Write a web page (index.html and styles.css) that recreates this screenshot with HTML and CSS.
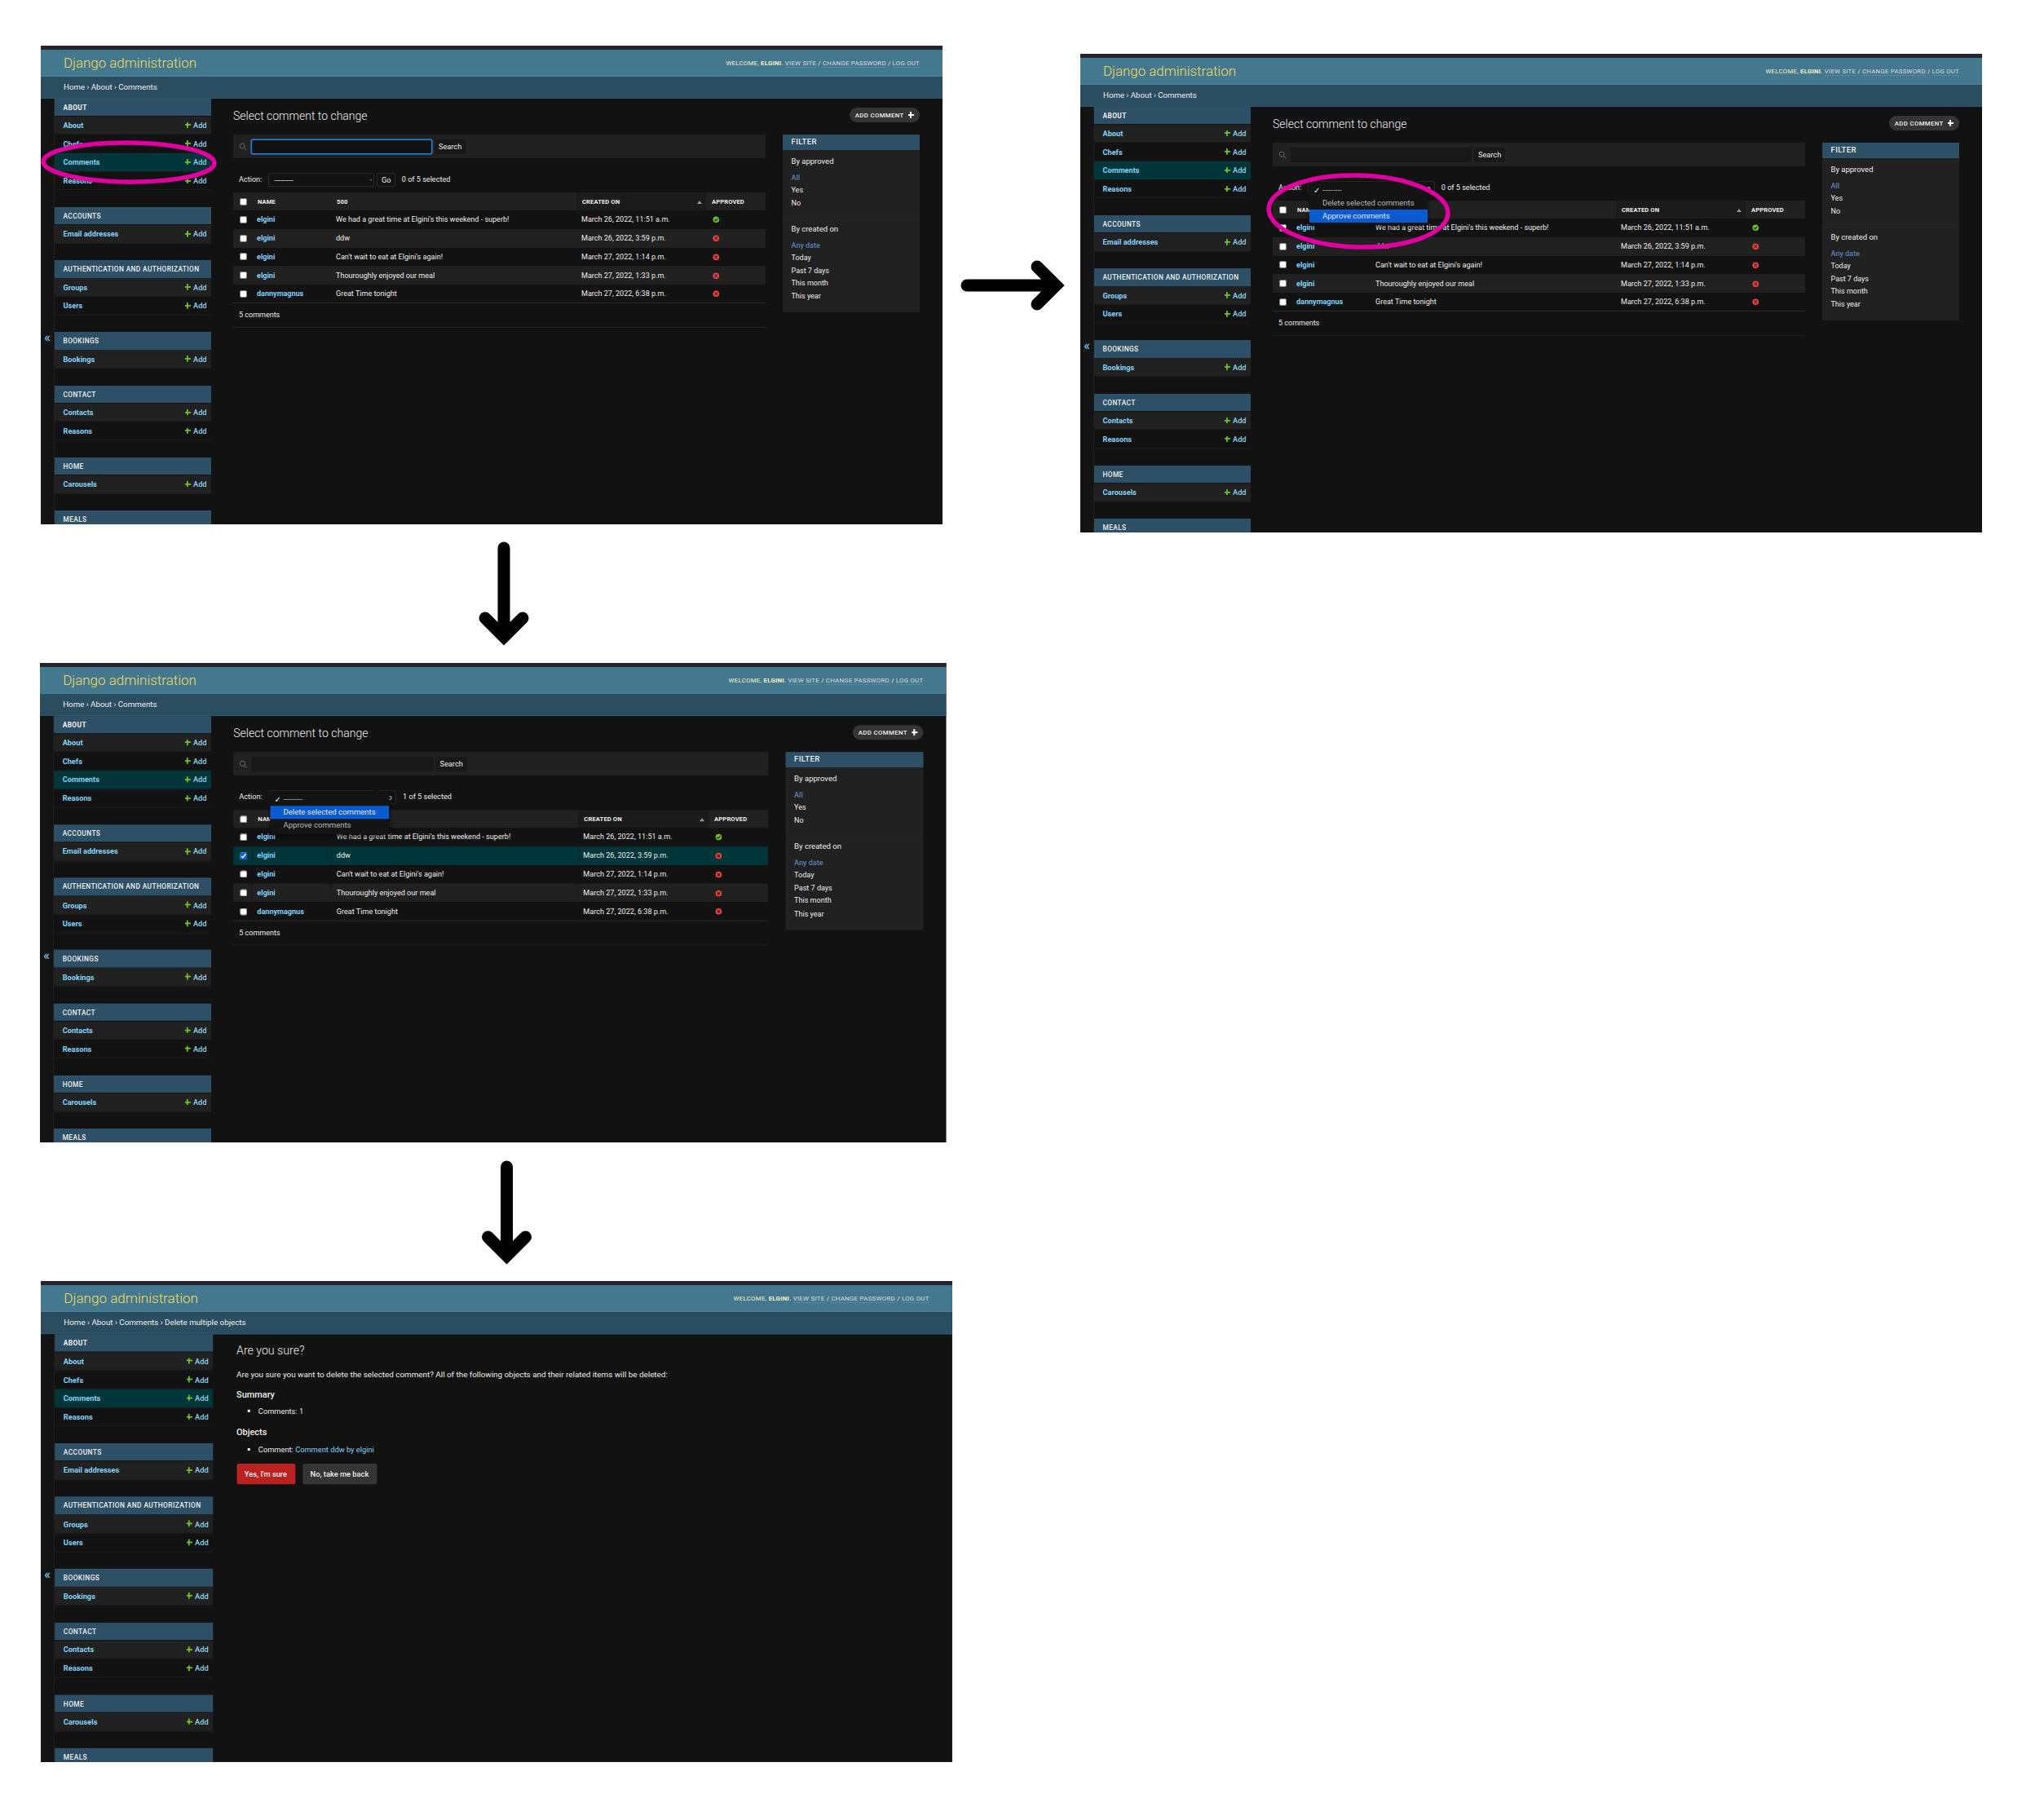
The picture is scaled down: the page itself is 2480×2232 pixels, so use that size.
FILE: index.html
```html
<!DOCTYPE html>
<html lang="en">
<head>
    <meta charset="UTF-8">
    <title>Django admin - deleting a comment</title>
    <link rel="stylesheet" href="styles.css">
</head>
<body>
    <!-- step 1: comment list, search focused -->
    <section class="shot shot-1">
        <header class="top">
            <div class="brand">Django administration</div>
            <div class="tools">Welcome, <b>elgini</b>. <u>View site</u> / <u>Change password</u> / <u>Log out</u></div>
        </header>
        <div class="crumbs">Home › About › Comments</div>
        <div class="body">
            <div class="toggle">«</div>
            <nav class="sidebar">
                <div class="module"><h4><b>About</b></h4>
                    <div class="row"><a>About</a><span class="add"><i class="plus"></i>Add</span></div>
                    <div class="row"><a>Chefs</a><span class="add"><i class="plus"></i>Add</span></div>
                    <div class="row current"><a>Comments</a><span class="add"><i class="plus"></i>Add</span></div>
                    <div class="row"><a>Reasons</a><span class="add"><i class="plus"></i>Add</span></div>
                </div>
                <div class="module"><h4>Accounts</h4>
                    <div class="row"><a>Email addresses</a><span class="add"><i class="plus"></i>Add</span></div>
                </div>
                <div class="module"><h4>Authentication and Authorization</h4>
                    <div class="row"><a>Groups</a><span class="add"><i class="plus"></i>Add</span></div>
                    <div class="row"><a>Users</a><span class="add"><i class="plus"></i>Add</span></div>
                </div>
                <div class="module"><h4>Bookings</h4>
                    <div class="row"><a>Bookings</a><span class="add"><i class="plus"></i>Add</span></div>
                </div>
                <div class="module"><h4>Contact</h4>
                    <div class="row"><a>Contacts</a><span class="add"><i class="plus"></i>Add</span></div>
                    <div class="row"><a>Reasons</a><span class="add"><i class="plus"></i>Add</span></div>
                </div>
                <div class="module"><h4>Home</h4>
                    <div class="row"><a>Carousels</a><span class="add"><i class="plus"></i>Add</span></div>
                </div>
                <div class="module"><h4>Meals</h4></div>
            </nav>
            <main class="content">
                <div class="title-row">
                    <h1>Select comment to change</h1>
                    <span class="add-btn">Add comment <i class="plus white"></i></span>
                </div>
                <div class="columns">
                    <div class="changelist">
                        <div class="search">
                            <svg class="glass" viewBox="0 0 12 12"><circle cx="5" cy="5" r="3.6"/><path d="M7.7 7.7L11 11"/></svg>
                            <span class="input focused"></span>
                            <span class="btn">Search</span>
                        </div>
                        <div class="actions">
                            <span>Action:</span>
                            <span class="select">---------<i class="caret"></i></span>
                            <span class="btn go">Go</span>
                            <span class="count">0 of 5 selected</span>
                        </div>
                        <table>
                            <colgroup><col class="c1"><col class="c2"><col class="c3"><col class="c4"><col></colgroup>
                            <thead><tr><th><input type="checkbox"></th><th>Name</th><th>500</th><th class="sorted">Created on<i class="sort"></i></th><th>Approved</th></tr></thead>
                            <tbody>
                                <tr><td><input type="checkbox"></td><td><a>elgini</a></td><td>We had a great time at Elgini's this weekend - superb!</td><td>March 26, 2022, 11:51 a.m.</td><td><svg class="ok" viewBox="0 0 10 10"><circle cx="5" cy="5" r="4.5"/><path d="M2.8 5.2L4.4 6.8L7.3 3.6"/></svg></td></tr>
                                <tr><td><input type="checkbox"></td><td><a>elgini</a></td><td>ddw</td><td>March 26, 2022, 3:59 p.m.</td><td><svg class="no" viewBox="0 0 10 10"><circle cx="5" cy="5" r="4.5"/><path d="M3.4 3.4L6.6 6.6M6.6 3.4L3.4 6.6"/></svg></td></tr>
                                <tr><td><input type="checkbox"></td><td><a>elgini</a></td><td>Can't wait to eat at Elgini's again!</td><td>March 27, 2022, 1:14 p.m.</td><td><svg class="no" viewBox="0 0 10 10"><circle cx="5" cy="5" r="4.5"/><path d="M3.4 3.4L6.6 6.6M6.6 3.4L3.4 6.6"/></svg></td></tr>
                                <tr><td><input type="checkbox"></td><td><a>elgini</a></td><td>Thouroughly enjoyed our meal</td><td>March 27, 2022, 1:33 p.m.</td><td><svg class="no" viewBox="0 0 10 10"><circle cx="5" cy="5" r="4.5"/><path d="M3.4 3.4L6.6 6.6M6.6 3.4L3.4 6.6"/></svg></td></tr>
                                <tr><td><input type="checkbox"></td><td><a>dannymagnus</a></td><td>Great Time tonight</td><td>March 27, 2022, 6:38 p.m.</td><td><svg class="no" viewBox="0 0 10 10"><circle cx="5" cy="5" r="4.5"/><path d="M3.4 3.4L6.6 6.6M6.6 3.4L3.4 6.6"/></svg></td></tr>
                            </tbody>
                        </table>
                        <p class="paginator">5 comments</p>
                    </div>
                    <aside class="filter">
                        <h2>Filter</h2>
                        <h3>By approved</h3>
                        <ul><li class="on">All</li><li>Yes</li><li>No</li></ul>
                        <h3 class="next">By created on</h3>
                        <ul><li class="on">Any date</li><li>Today</li><li>Past 7 days</li><li>This month</li><li>This year</li></ul>
                    </aside>
                </div>
            </main>
        </div>
    </section>

    <!-- step 2: action menu open, approve highlighted -->
    <section class="shot shot-2">
        <header class="top">
            <div class="brand">Django administration</div>
            <div class="tools">Welcome, <b>elgini</b>. <u>View site</u> / <u>Change password</u> / <u>Log out</u></div>
        </header>
        <div class="crumbs">Home › About › Comments</div>
        <div class="body">
            <div class="toggle">«</div>
            <nav class="sidebar">
                <div class="module"><h4><b>About</b></h4>
                    <div class="row"><a>About</a><span class="add"><i class="plus"></i>Add</span></div>
                    <div class="row"><a>Chefs</a><span class="add"><i class="plus"></i>Add</span></div>
                    <div class="row current"><a>Comments</a><span class="add"><i class="plus"></i>Add</span></div>
                    <div class="row"><a>Reasons</a><span class="add"><i class="plus"></i>Add</span></div>
                </div>
                <div class="module"><h4>Accounts</h4>
                    <div class="row"><a>Email addresses</a><span class="add"><i class="plus"></i>Add</span></div>
                </div>
                <div class="module"><h4>Authentication and Authorization</h4>
                    <div class="row"><a>Groups</a><span class="add"><i class="plus"></i>Add</span></div>
                    <div class="row"><a>Users</a><span class="add"><i class="plus"></i>Add</span></div>
                </div>
                <div class="module"><h4>Bookings</h4>
                    <div class="row"><a>Bookings</a><span class="add"><i class="plus"></i>Add</span></div>
                </div>
                <div class="module"><h4>Contact</h4>
                    <div class="row"><a>Contacts</a><span class="add"><i class="plus"></i>Add</span></div>
                    <div class="row"><a>Reasons</a><span class="add"><i class="plus"></i>Add</span></div>
                </div>
                <div class="module"><h4>Home</h4>
                    <div class="row"><a>Carousels</a><span class="add"><i class="plus"></i>Add</span></div>
                </div>
                <div class="module"><h4>Meals</h4></div>
            </nav>
            <main class="content">
                <div class="title-row">
                    <h1>Select comment to change</h1>
                    <span class="add-btn">Add comment <i class="plus white"></i></span>
                </div>
                <div class="columns">
                    <div class="changelist">
                        <div class="search">
                            <svg class="glass" viewBox="0 0 12 12"><circle cx="5" cy="5" r="3.6"/><path d="M7.7 7.7L11 11"/></svg>
                            <span class="input"></span>
                            <span class="btn">Search</span>
                        </div>
                        <div class="actions">
                            <span>Action:</span>
                            <span class="select"></span>
                            <span class="btn go">Go</span>
                            <span class="count">0 of 5 selected</span>
                        </div>
                        <table>
                            <colgroup><col class="c1"><col class="c2"><col class="c3"><col class="c4"><col></colgroup>
                            <thead><tr><th><input type="checkbox"></th><th>Name</th><th>500</th><th class="sorted">Created on<i class="sort"></i></th><th>Approved</th></tr></thead>
                            <tbody>
                                <tr><td><input type="checkbox"></td><td><a>elgini</a></td><td>We had a great time at Elgini's this weekend - superb!</td><td>March 26, 2022, 11:51 a.m.</td><td><svg class="ok" viewBox="0 0 10 10"><circle cx="5" cy="5" r="4.5"/><path d="M2.8 5.2L4.4 6.8L7.3 3.6"/></svg></td></tr>
                                <tr><td><input type="checkbox"></td><td><a>elgini</a></td><td>ddw</td><td>March 26, 2022, 3:59 p.m.</td><td><svg class="no" viewBox="0 0 10 10"><circle cx="5" cy="5" r="4.5"/><path d="M3.4 3.4L6.6 6.6M6.6 3.4L3.4 6.6"/></svg></td></tr>
                                <tr><td><input type="checkbox"></td><td><a>elgini</a></td><td>Can't wait to eat at Elgini's again!</td><td>March 27, 2022, 1:14 p.m.</td><td><svg class="no" viewBox="0 0 10 10"><circle cx="5" cy="5" r="4.5"/><path d="M3.4 3.4L6.6 6.6M6.6 3.4L3.4 6.6"/></svg></td></tr>
                                <tr><td><input type="checkbox"></td><td><a>elgini</a></td><td>Thouroughly enjoyed our meal</td><td>March 27, 2022, 1:33 p.m.</td><td><svg class="no" viewBox="0 0 10 10"><circle cx="5" cy="5" r="4.5"/><path d="M3.4 3.4L6.6 6.6M6.6 3.4L3.4 6.6"/></svg></td></tr>
                                <tr><td><input type="checkbox"></td><td><a>dannymagnus</a></td><td>Great Time tonight</td><td>March 27, 2022, 6:38 p.m.</td><td><svg class="no" viewBox="0 0 10 10"><circle cx="5" cy="5" r="4.5"/><path d="M3.4 3.4L6.6 6.6M6.6 3.4L3.4 6.6"/></svg></td></tr>
                            </tbody>
                        </table>
                        <p class="paginator">5 comments</p>
                    </div>
                    <aside class="filter">
                        <h2>Filter</h2>
                        <h3>By approved</h3>
                        <ul><li class="on">All</li><li>Yes</li><li>No</li></ul>
                        <h3 class="next">By created on</h3>
                        <ul><li class="on">Any date</li><li>Today</li><li>Past 7 days</li><li>This month</li><li>This year</li></ul>
                    </aside>
                </div>
            </main>
        </div>
        <div class="menu menu-2">
            <div class="opt"><span class="tick">✓</span>---------</div>
            <div class="opt">Delete selected comments</div>
            <div class="opt hot">Approve comments</div>
        </div>
    </section>

    <!-- step 3: row ticked, delete highlighted -->
    <section class="shot shot-3">
        <header class="top">
            <div class="brand">Django administration</div>
            <div class="tools">Welcome, <b>elgini</b>. <u>View site</u> / <u>Change password</u> / <u>Log out</u></div>
        </header>
        <div class="crumbs">Home › About › Comments</div>
        <div class="body">
            <div class="toggle">«</div>
            <nav class="sidebar">
                <div class="module"><h4><b>About</b></h4>
                    <div class="row"><a>About</a><span class="add"><i class="plus"></i>Add</span></div>
                    <div class="row"><a>Chefs</a><span class="add"><i class="plus"></i>Add</span></div>
                    <div class="row current"><a>Comments</a><span class="add"><i class="plus"></i>Add</span></div>
                    <div class="row"><a>Reasons</a><span class="add"><i class="plus"></i>Add</span></div>
                </div>
                <div class="module"><h4>Accounts</h4>
                    <div class="row"><a>Email addresses</a><span class="add"><i class="plus"></i>Add</span></div>
                </div>
                <div class="module"><h4>Authentication and Authorization</h4>
                    <div class="row"><a>Groups</a><span class="add"><i class="plus"></i>Add</span></div>
                    <div class="row"><a>Users</a><span class="add"><i class="plus"></i>Add</span></div>
                </div>
                <div class="module"><h4>Bookings</h4>
                    <div class="row"><a>Bookings</a><span class="add"><i class="plus"></i>Add</span></div>
                </div>
                <div class="module"><h4>Contact</h4>
                    <div class="row"><a>Contacts</a><span class="add"><i class="plus"></i>Add</span></div>
                    <div class="row"><a>Reasons</a><span class="add"><i class="plus"></i>Add</span></div>
                </div>
                <div class="module"><h4>Home</h4>
                    <div class="row"><a>Carousels</a><span class="add"><i class="plus"></i>Add</span></div>
                </div>
                <div class="module"><h4>Meals</h4></div>
            </nav>
            <main class="content">
                <div class="title-row">
                    <h1>Select comment to change</h1>
                    <span class="add-btn">Add comment <i class="plus white"></i></span>
                </div>
                <div class="columns">
                    <div class="changelist">
                        <div class="search">
                            <svg class="glass" viewBox="0 0 12 12"><circle cx="5" cy="5" r="3.6"/><path d="M7.7 7.7L11 11"/></svg>
                            <span class="input"></span>
                            <span class="btn">Search</span>
                        </div>
                        <div class="actions">
                            <span>Action:</span>
                            <span class="select"></span>
                            <span class="btn go">Go</span>
                            <span class="count">1 of 5 selected</span>
                        </div>
                        <table>
                            <colgroup><col class="c1"><col class="c2"><col class="c3"><col class="c4"><col></colgroup>
                            <thead><tr><th><input type="checkbox"></th><th>Name</th><th>500</th><th class="sorted">Created on<i class="sort"></i></th><th>Approved</th></tr></thead>
                            <tbody>
                                <tr><td><input type="checkbox"></td><td><a>elgini</a></td><td>We had a great time at Elgini's this weekend - superb!</td><td>March 26, 2022, 11:51 a.m.</td><td><svg class="ok" viewBox="0 0 10 10"><circle cx="5" cy="5" r="4.5"/><path d="M2.8 5.2L4.4 6.8L7.3 3.6"/></svg></td></tr>
                                <tr class="picked"><td><input type="checkbox" checked></td><td><a>elgini</a></td><td>ddw</td><td>March 26, 2022, 3:59 p.m.</td><td><svg class="no" viewBox="0 0 10 10"><circle cx="5" cy="5" r="4.5"/><path d="M3.4 3.4L6.6 6.6M6.6 3.4L3.4 6.6"/></svg></td></tr>
                                <tr><td><input type="checkbox"></td><td><a>elgini</a></td><td>Can't wait to eat at Elgini's again!</td><td>March 27, 2022, 1:14 p.m.</td><td><svg class="no" viewBox="0 0 10 10"><circle cx="5" cy="5" r="4.5"/><path d="M3.4 3.4L6.6 6.6M6.6 3.4L3.4 6.6"/></svg></td></tr>
                                <tr><td><input type="checkbox"></td><td><a>elgini</a></td><td>Thouroughly enjoyed our meal</td><td>March 27, 2022, 1:33 p.m.</td><td><svg class="no" viewBox="0 0 10 10"><circle cx="5" cy="5" r="4.5"/><path d="M3.4 3.4L6.6 6.6M6.6 3.4L3.4 6.6"/></svg></td></tr>
                                <tr><td><input type="checkbox"></td><td><a>dannymagnus</a></td><td>Great Time tonight</td><td>March 27, 2022, 6:38 p.m.</td><td><svg class="no" viewBox="0 0 10 10"><circle cx="5" cy="5" r="4.5"/><path d="M3.4 3.4L6.6 6.6M6.6 3.4L3.4 6.6"/></svg></td></tr>
                            </tbody>
                        </table>
                        <p class="paginator">5 comments</p>
                    </div>
                    <aside class="filter">
                        <h2>Filter</h2>
                        <h3>By approved</h3>
                        <ul><li class="on">All</li><li>Yes</li><li>No</li></ul>
                        <h3 class="next">By created on</h3>
                        <ul><li class="on">Any date</li><li>Today</li><li>Past 7 days</li><li>This month</li><li>This year</li></ul>
                    </aside>
                </div>
            </main>
        </div>
        <div class="menu menu-3">
            <div class="opt"><span class="tick">✓</span>---------</div>
            <div class="opt hot">Delete selected comments</div>
            <div class="opt">Approve comments</div>
        </div>
    </section>

    <!-- step 4: confirmation page -->
    <section class="shot shot-4">
        <header class="top">
            <div class="brand">Django administration</div>
            <div class="tools">Welcome, <b>elgini</b>. <u>View site</u> / <u>Change password</u> / <u>Log out</u></div>
        </header>
        <div class="crumbs">Home › About › Comments › Delete multiple objects</div>
        <div class="body">
            <div class="toggle">«</div>
            <nav class="sidebar">
                <div class="module"><h4><b>About</b></h4>
                    <div class="row"><a>About</a><span class="add"><i class="plus"></i>Add</span></div>
                    <div class="row"><a>Chefs</a><span class="add"><i class="plus"></i>Add</span></div>
                    <div class="row current"><a>Comments</a><span class="add"><i class="plus"></i>Add</span></div>
                    <div class="row"><a>Reasons</a><span class="add"><i class="plus"></i>Add</span></div>
                </div>
                <div class="module"><h4>Accounts</h4>
                    <div class="row"><a>Email addresses</a><span class="add"><i class="plus"></i>Add</span></div>
                </div>
                <div class="module"><h4>Authentication and Authorization</h4>
                    <div class="row"><a>Groups</a><span class="add"><i class="plus"></i>Add</span></div>
                    <div class="row"><a>Users</a><span class="add"><i class="plus"></i>Add</span></div>
                </div>
                <div class="module"><h4>Bookings</h4>
                    <div class="row"><a>Bookings</a><span class="add"><i class="plus"></i>Add</span></div>
                </div>
                <div class="module"><h4>Contact</h4>
                    <div class="row"><a>Contacts</a><span class="add"><i class="plus"></i>Add</span></div>
                    <div class="row"><a>Reasons</a><span class="add"><i class="plus"></i>Add</span></div>
                </div>
                <div class="module"><h4>Home</h4>
                    <div class="row"><a>Carousels</a><span class="add"><i class="plus"></i>Add</span></div>
                </div>
                <div class="module"><h4>Meals</h4></div>
            </nav>
            <main class="content confirm">
                <h1>Are you sure?</h1>
                <p>Are you sure you want to delete the selected comment? All of the following objects and their related items will be deleted:</p>
                <h5>Summary</h5>
                <ul><li>Comments: 1</li></ul>
                <h5>Objects</h5>
                <ul><li>Comment: <a>Comment ddw by elgini</a></li></ul>
                <div class="confirm-btns">
                    <span class="danger">Yes, I'm sure</span>
                    <span class="back">No, take me back</span>
                </div>
            </main>
        </div>
    </section>

    <!-- annotations drawn on top of the screenshots -->
    <svg class="marks" viewBox="0 0 2480 2232">
        <ellipse cx="158" cy="199" rx="105" ry="24" transform="rotate(0.5 158 199)"/>
        <ellipse cx="1666" cy="259" rx="110" ry="44" transform="rotate(1.5 1666 259)"/>
        <path class="arrow" d="M1186 350H1292M1272 327L1295 350L1272 373"/>
        <path class="arrow" d="M618 672V780M595 758L618 781L641 758"/>
        <path class="arrow" d="M621.500 1431V1539M598.500 1517L621.500 1540L644.500 1517"/>
    </svg>
</body>
</html>
```

FILE: styles.css
```css
* {
    box-sizing: border-box;
}
body {
    margin: 0;
    width: 2480px;
    height: 2232px;
    position: relative;
    background-color: #fff;
    font-family: Roboto, "Liberation Sans", sans-serif;
    color: #eee;
    overflow: hidden;
}

/* screenshots sit on a free canvas, each one shot at a slightly different scale */
.shot {
    position: absolute;
    width: 1106px;
    height: 587px;
    display: flex;
    flex-direction: column;
    background-color: #121212;
    overflow: hidden;
    border-top: 5px solid #24242c;
    transform-origin: 0 0;
}
.shot-1 { left: 50px; top: 56px; }
.shot-2 { left: 1325px; top: 66px; }
.shot-3 { left: 49px; top: 813px; transform: scale(1.005, 1.0017); }
.shot-4 { left: 50px; top: 1571px; transform: scale(1.0108, 1.005); }

.top {
    flex: none;
    height: 33px;
    padding: 0 28px;
    display: flex;
    align-items: center;
    justify-content: space-between;
    background-color: #44788f;
    border-bottom: 1px solid #4e8299;
}
.brand {
    font-size: 16.9px;
    font-weight: 300;
    color: #f5dd5d;
}
.tools {
    font-size: 7.8px;
    letter-spacing: 0.25px;
    text-transform: uppercase;
    color: #f5f1c8;
}
.tools b {
    font-weight: 700;
}
.tools u {
    text-decoration: none;
    color: #ddd;
    border-bottom: 1px solid #568aa1;
}
.crumbs {
    flex: none;
    height: 26.5px;
    padding-left: 28px;
    line-height: 25px;
    font-size: 9.7px;
    color: #f0f0f0;
    background-color: #2a4d60;
    border-bottom: 1px solid #2f5569;
}

.body {
    flex: 1;
    display: flex;
    min-height: 0;
}
.toggle {
    flex: none;
    width: 17px;
    padding-top: 284px;
    text-align: center;
    font-size: 17px;
    line-height: 17px;
    color: #81d4fa;
    background-color: #141414;
    border-right: 1px solid #1f1f1f;
}
.sidebar {
    flex: none;
    width: 192px;
}
.module {
    margin-bottom: 20.7px;
}
.module h4 {
    margin: 0 0 0.5px;
    height: 21.5px;
    padding-left: 10.5px;
    line-height: 22.5px;
    font-size: 8.3px;
    font-weight: 500;
    letter-spacing: 0.4px;
    text-transform: uppercase;
    background-color: #2d5066;
    color: #eee;
}
.module h4 b {
    font-weight: 700;
}
.row {
    height: 22.7px;
    padding: 0 5.5px 0 10.5px;
    display: flex;
    align-items: center;
    justify-content: space-between;
    font-size: 9.2px;
    border-bottom: 1px solid #1a1a1a;
}
.row:nth-of-type(odd) {
    background-color: #212121;
}
.row.current {
    background-color: #00363a;
}
.row a {
    font-weight: 700;
    color: #81d4fa;
}
.add {
    display: flex;
    align-items: center;
    gap: 3px;
    color: #8fd4ee;
    font-weight: 500;
}
.plus {
    position: relative;
    display: inline-block;
    width: 7.5px;
    height: 7.5px;
    background:
        linear-gradient(#70bf2b, #70bf2b) center / 100% 1.8px no-repeat,
        linear-gradient(#70bf2b, #70bf2b) center / 1.8px 100% no-repeat;
}
.plus.white {
    background:
        linear-gradient(#fff, #fff) center / 100% 2px no-repeat,
        linear-gradient(#fff, #fff) center / 2px 100% no-repeat;
}

.content {
    flex: 1;
    min-width: 0;
    padding: 11.5px 28px 0 27px;
}
.title-row {
    height: 18px;
    margin-bottom: 15px;
    display: flex;
    align-items: center;
    justify-content: space-between;
}
.title-row h1 {
    padding-top: 1.5px;
}
h1 {
    margin: 0;
    font-size: 14px;
    font-weight: 300;
    color: #eee;
}
.add-btn {
    flex: none;
    width: 86px;
    height: 18px;
    display: flex;
    align-items: center;
    justify-content: center;
    gap: 5px;
    border-radius: 9px;
    background-color: #353535;
    font-size: 7.8px;
    font-weight: 500;
    letter-spacing: 0.35px;
    text-transform: uppercase;
    color: #eee;
}
.columns {
    display: flex;
    gap: 21px;
}
.changelist {
    flex: 1;
    min-width: 0;
}

.search {
    height: 29px;
    padding-left: 7px;
    display: flex;
    align-items: center;
    background-color: #212121;
}
.glass {
    width: 10px;
    height: 10px;
    margin-right: 5px;
    fill: none;
    stroke: #666;
    stroke-width: 1.2;
}
.input {
    width: 222px;
    height: 18px;
    background-color: #181818;
    border-radius: 2px;
}
.input.focused {
    background-color: #121212;
    border: 1px solid #1e88e5;
    box-shadow: 0 0 0 0.5px #1e88e5;
}
.btn {
    display: inline-flex;
    align-items: center;
    justify-content: center;
    height: 18px;
    margin-left: 3px;
    padding: 0 5px;
    font-size: 9.2px;
    background-color: #181818;
    border-radius: 2px;
    color: #eee;
}
.actions {
    height: 17px;
    margin: 17.5px 0 7.5px;
    padding-left: 7px;
    display: flex;
    align-items: center;
    font-size: 9.1px;
}
.select {
    position: relative;
    width: 130px;
    height: 17px;
    margin-left: 8px;
    padding-left: 6px;
    line-height: 16px;
    font-size: 9.5px;
    border: 1px solid #2a2a2a;
    border-radius: 2px;
}
.caret {
    position: absolute;
    right: 2px;
    top: 7px;
    border-top: 2px solid #999;
    border-left: 1.5px solid transparent;
    border-right: 1.5px solid transparent;
}
.go {
    width: 23px;
    height: 17px;
    padding: 0;
    border: 1px solid #2a2a2a;
    background: none;
}
.count {
    margin-left: 7.5px;
}

table {
    width: 100%;
    table-layout: fixed;
    border-collapse: collapse;
    font-size: 9.05px;
}
.c1 { width: 23px; }
.c2 { width: 97px; }
.c3 { width: 301px; }
.c4 { width: 159px; }
th {
    height: 22px;
    padding: 0 0 0 7px;
    text-align: left;
    font-size: 7.6px;
    font-weight: 700;
    letter-spacing: 0.1px;
    text-transform: uppercase;
    background-color: #212121;
}
th.sorted {
    position: relative;
    background-color: #1b1b1b;
}
.sort {
    position: absolute;
    right: 5px;
    top: 10px;
    border-bottom: 4px solid #999;
    border-left: 3px solid transparent;
    border-right: 3px solid transparent;
}
td {
    height: 22.8px;
    padding: 0 0 0 6px;
    white-space: nowrap;
    overflow: hidden;
}
th:first-child, td:first-child {
    padding-left: 8px;
}
tbody tr:nth-child(even) {
    background-color: #212121;
}
tbody tr.picked {
    background-color: #00363a;
}
tbody tr:last-child {
    border-bottom: 1px solid #2a2a2a;
}
td a {
    font-weight: 700;
    color: #81d4fa;
}
input[type="checkbox"] {
    display: block;
    width: 9px;
    height: 9px;
    margin: 0;
    accent-color: #0a60d8;
}
td svg {
    display: block;
    width: 8.5px;
    height: 8.5px;
    margin-left: 2px;
    stroke-linecap: round;
    stroke-linejoin: round;
}
.ok circle { fill: #70bf2b; }
.ok path { fill: none; stroke: #1a2a10; stroke-width: 1.4; }
.no circle { fill: #ef4444; }
.no path { fill: none; stroke: #4a1414; stroke-width: 1.5; }
.paginator {
    margin: 0;
    height: 30px;
    padding-left: 7px;
    line-height: 29px;
    font-size: 9px;
    border-bottom: 1px solid #1f1f1f;
}

.filter {
    flex: none;
    width: 168px;
    height: 218px;
    background-color: #212121;
}
.filter h2 {
    margin: 0;
    height: 19px;
    padding-left: 10.5px;
    line-height: 18px;
    font-size: 9.5px;
    font-weight: 500;
    letter-spacing: 0.4px;
    text-transform: uppercase;
    background-color: #2d5066;
}
.filter h3 {
    margin: 4px 0 3px;
    height: 20px;
    padding-left: 10.5px;
    line-height: 20px;
    font-size: 9.5px;
    font-weight: 400;
}
.filter h3.next {
    margin-top: 2px;
}
.filter ul {
    margin: 0;
    padding: 0 0 10.8px 10.5px;
    list-style: none;
    border-bottom: 1px solid #252525;
}
.filter ul:last-child {
    border-bottom: 0;
}
.filter li {
    height: 15.4px;
    line-height: 15.4px;
    font-size: 9px;
}
.filter li.on {
    color: #5b80b2;
    font-weight: 500;
}

/* open select popup, lies over the table */
.menu {
    position: absolute;
    width: 145px;
    padding: 1px 0 3px;
    background-color: #141414;
    box-shadow: 0 1px 4px rgba(0,0,0,0.6);
    border-radius: 3px;
}
.menu-2 { left: 281px; top: 152.5px; }
.menu-3 { left: 281px; top: 152.5px; }
.opt {
    position: relative;
    height: 16.3px;
    padding-left: 16px;
    line-height: 16px;
    font-size: 9.5px;
    color: #bbb;
}
.opt.hot {
    background-color: #0a5bd0;
    color: #e6e6e6;
}
.tick {
    position: absolute;
    left: 5px;
    top: 1px;
    font-family: "DejaVu Sans", sans-serif;
    font-size: 10px;
    font-weight: 700;
    color: #eee;
}

/* confirmation page */
.confirm {
    padding: 12.3px 28px 0 28.5px;
}
.confirm h1 {
    margin-bottom: 15.1px;
}
.confirm p {
    margin: 0 0 13px;
    font-size: 9.75px;
}
.confirm h5 {
    margin: 0 0 8.3px;
    font-size: 10.8px;
    font-weight: 500;
}
.confirm ul {
    margin: 0 0 14.2px;
    padding-left: 26.5px;
    list-style: square;
    font-size: 9.2px;
}
.confirm ul a {
    color: #81d4fa;
}
.confirm-btns {
    display: flex;
    gap: 9px;
    margin-top: -1.4px;
}
.danger, .back {
    height: 25px;
    display: flex;
    align-items: center;
    justify-content: center;
    border-radius: 2px;
    font-size: 9.2px;
    font-weight: 500;
}
.danger {
    width: 71px;
    background-color: #ba2121;
}
.back {
    width: 90px;
    background-color: #353535;
}

.marks {
    position: absolute;
    left: 0;
    top: 0;
    width: 2480px;
    height: 2232px;
    pointer-events: none;
}
.marks ellipse {
    fill: none;
    stroke: #e000a0;
    stroke-width: 5.5;
}
.arrow {
    fill: none;
    stroke: #000;
    stroke-width: 15;
    stroke-linecap: round;
    stroke-linejoin: miter;
}
```
